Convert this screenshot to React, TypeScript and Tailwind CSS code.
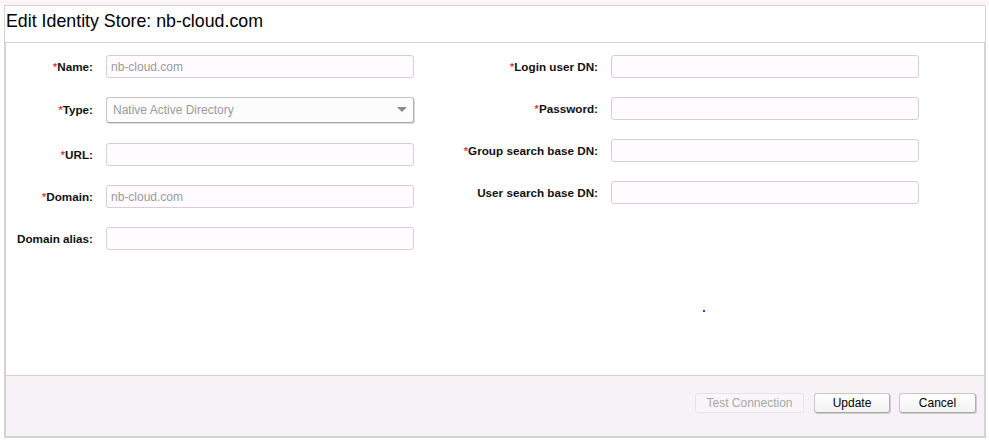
import React from "react";

const font = { fontFamily: '"Liberation Sans", Arial, sans-serif' };

function Label({ text, req, w }: { text: string; req?: boolean; w: string }) {
  return (
    <div className={`${w} shrink-0 text-right text-[11.7px] font-bold text-[#111] leading-[14px]`}>
      {req && <span className="font-normal text-[#d40000]">*</span>}
      {text}
    </div>
  );
}

function Input({ value }: { value?: string }) {
  return (
    <div className="ml-[13px] w-[308px] h-[23px] rounded-[3px] border border-[#d3cfd3] bg-[#fffbfe] flex items-center pl-[4px] text-[12px] text-[#9a9a9a]">
      {value}
    </div>
  );
}

function Select({ value }: { value: string }) {
  return (
    <div className="ml-[13px] w-[308px] h-[26px] rounded-[3px] border border-[#c9c6c9] border-r-[#b0adb0] border-b-[#a9a6a9] bg-[#fdfcfd] flex items-center justify-between pl-[6px] pr-[6px] text-[12px] text-[#9a9a9a] shadow-[1px_1px_0_#dcdcdc]">
      <span>{value}</span>
      <svg width="10" height="6" viewBox="0 0 10 6">
        <polygon points="0,0 10,0 5,5" fill="#8a8a8a" />
      </svg>
    </div>
  );
}

function Row({ children, mt }: { children: React.ReactNode; mt: string }) {
  return <div className={`flex items-center ${mt}`}>{children}</div>;
}

export default function App() {
  return (
    <div className="relative w-[989px] h-[440px] bg-white" style={font}>
      <div className="h-[5px] bg-[#fbf5f7]" />
      <div className="ml-[4px] w-[982px]">
        <div className="h-[38px] border border-[#d3d3d3] pl-[1px] pt-[4px] text-[17.8px] leading-[22px] text-black">
          Edit Identity Store: nb-cloud.com
        </div>
        <div className="border-x-2 border-b-2 border-[#d3d3d3]">
          <div className="h-[332px] bg-white flex pt-[12px]">
            <div className="flex flex-col">
              <Row mt="mt-0">
                <Label text="Name:" req w="w-[87px]" />
                <Input value="nb-cloud.com" />
              </Row>
              <Row mt="mt-[19px]">
                <Label text="Type:" req w="w-[87px]" />
                <Select value="Native Active Directory" />
              </Row>
              <Row mt="mt-[20px]">
                <Label text="URL:" req w="w-[87px]" />
                <Input />
              </Row>
              <Row mt="mt-[19px]">
                <Label text="Domain:" req w="w-[87px]" />
                <Input value="nb-cloud.com" />
              </Row>
              <Row mt="mt-[19px]">
                <Label text="Domain alias:" w="w-[87px]" />
                <Input />
              </Row>
            </div>
            <div className="flex flex-col">
              <Row mt="mt-0">
                <Label text="Login user DN:" req w="w-[184px]" />
                <Input />
              </Row>
              <Row mt="mt-[19px]">
                <Label text="Password:" req w="w-[184px]" />
                <Input />
              </Row>
              <Row mt="mt-[19px]">
                <Label text="Group search base DN:" req w="w-[184px]" />
                <Input />
              </Row>
              <Row mt="mt-[19px]">
                <Label text="User search base DN:" w="w-[184px]" />
                <Input />
              </Row>
            </div>
          </div>
          <div className="h-[61px] border-t border-[#d3d3d3] bg-[#f6f2f6] flex justify-end items-start pt-[17px] pr-[8px]">
            <button className="w-[109px] h-[20px] rounded-[3px] border border-[#e6e2e6] bg-[#f9f6f9] text-[12px] text-[#a8a8a8] leading-none">
              Test Connection
            </button>
            <button className="ml-[10px] w-[76px] h-[20px] rounded-[3px] border border-[#c6c6c6] border-b-[#a8a8a8] border-r-[#b0b0b0] bg-gradient-to-b from-white to-[#f3f3f3] text-[12px] text-black leading-none shadow-[1px_1px_0_#d0d0d0]">
              Update
            </button>
            <button className="ml-[9px] w-[77px] h-[20px] rounded-[3px] border border-[#c6c6c6] border-b-[#a8a8a8] border-r-[#b0b0b0] bg-gradient-to-b from-white to-[#f3f3f3] text-[12px] text-black leading-none shadow-[1px_1px_0_#d0d0d0]">
              Cancel
            </button>
          </div>
        </div>
      </div>
      <span className="absolute left-[703px] top-[310px] w-[2px] h-[2px] bg-[#3030ff]" />
    </div>
  );
}
